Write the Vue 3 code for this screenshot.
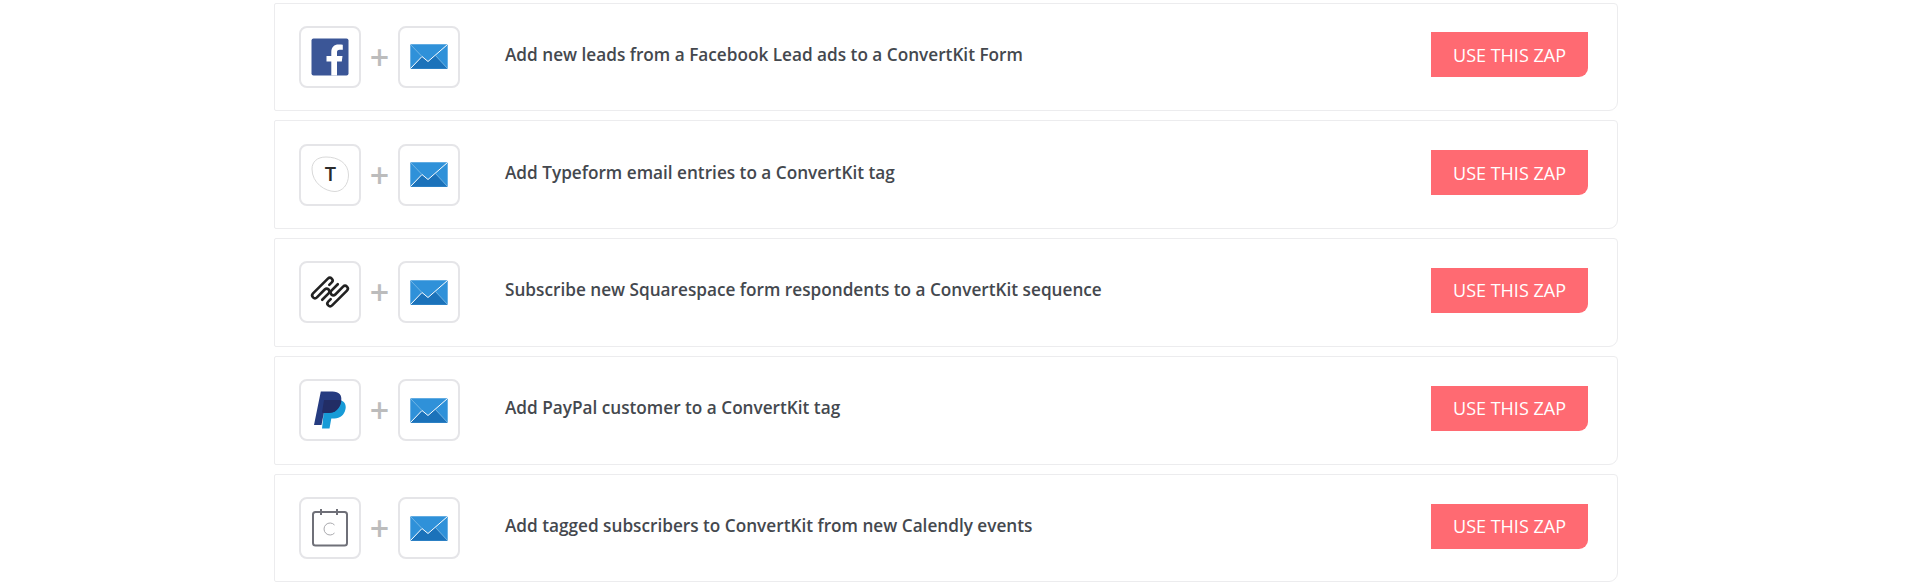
<template>
  <div class="page">
    <div v-for="zap in zaps" :key="zap.app" class="zap">
      <div class="icons">
        <div class="tile">
          <svg v-if="zap.app === 'facebook'" width="38" height="38" viewBox="0 0 38 38">
            <rect x="0.5" y="0.5" width="37" height="37" rx="2" fill="#3b5697" />
            <path d="M26 37.5V23.4h4.8l.7-5.5H26v-3.5c0-1.6.5-2.7 2.8-2.7h3V6.8c-.5-.1-2.300-.2-4.300-.2-4.300 0-7.200 2.600-7.200 7.400v3.900h-4.800v5.500h4.800v14.100z" fill="#fff" />
          </svg>
          <svg v-else-if="zap.app === 'typeform'" width="38" height="38" viewBox="0 0 38 38">
            <path d="M1 13C1 6 6 1 15 1c12 0 22.500 6 22.500 18 0 10-6.500 16.500-13.500 16.500C14 35.500 1 27 1 13z" fill="#fff" stroke="#d9d9d9" />
            <text x="19.500" y="25" class="t-mark" text-anchor="middle">T</text>
          </svg>
          <svg v-else-if="zap.app === 'squarespace'" width="44" height="36" viewBox="0 0 44 36">
            <g transform="translate(22 18) rotate(-45)" fill="none" stroke="#222" stroke-width="2.600" stroke-linecap="round">
              <path d="M4.500 -5.500H8A2.750 2.750 0 0 0 8 -11H-13A2.750 2.750 0 0 0 -13 -5.500H-2A2.750 2.750 0 0 1 -2 0H-11" />
              <path d="M4.500 -5.500H8A2.750 2.750 0 0 0 8 -11H-13A2.750 2.750 0 0 0 -13 -5.500H-2A2.750 2.750 0 0 1 -2 0H-11" transform="rotate(180)" />
            </g>
          </svg>
          <svg v-else-if="zap.app === 'paypal'" width="32" height="38" viewBox="0 0 32 38">
            <path d="M11 9h13c6 0 8.500 4 7.500 9-1.200 6-5.500 9.500-11 9.500h-3.200L15.500 37.500H8z" fill="#179bd7" />
            <path d="M6.800 .5h11.700c6.500 0 9.700 3.500 8.700 9.500-1.200 7.500-6 12-13 12H9.800L7.500 34H0z" fill="#253b80" />
            <path d="M10 9h14c2 0 3 .3 3.300 1-1.200 7.500-6 12-13 12H9.800L8 21.500z" fill="#222d65" />
          </svg>
          <svg v-else width="38" height="40" viewBox="0 0 38 40">
            <rect x="2" y="4" width="34" height="33.500" rx="2.500" fill="none" stroke="#6f7078" stroke-width="2" />
            <path d="M10 1v6M26 1v6" stroke="#6f7078" stroke-width="2" />
            <path d="M23.500 17a6 6 0 1 0 0 8" fill="none" stroke="#a9a9ad" />
          </svg>
        </div>
        <span class="plus">+</span>
        <div class="tile">
          <svg width="38" height="25" viewBox="0 0 38 25">
            <rect x="0.300" y="0.300" width="37.400" height="24.400" rx="1" fill="#2f91d9" />
            <path d="M0.300 24.700 12 12.500l6 5 7-6.500 12.700 13.700z" fill="#1b72ba" />
            <path d="M0.500 24.500 12 12.500l6 5L37.500 0.500" fill="none" stroke="#fff" stroke-width="1" />
            <path d="M0.500 0.500 12 12.500M25 11l12.500 13.500" fill="none" stroke="#8fc4ea" stroke-width="0.700" />
          </svg>
        </div>
      </div>
      <p class="title">{{ zap.title }}</p>
      <a class="use-btn">USE THIS ZAP</a>
    </div>
  </div>
</template>

<script setup>
const zaps = [
  { app: 'facebook', title: 'Add new leads from a Facebook Lead ads to a ConvertKit Form' },
  { app: 'typeform', title: 'Add Typeform email entries to a ConvertKit tag' },
  { app: 'squarespace', title: 'Subscribe new Squarespace form respondents to a ConvertKit sequence' },
  { app: 'paypal', title: 'Add PayPal customer to a ConvertKit tag' },
  { app: 'calendly', title: 'Add tagged subscribers to ConvertKit from new Calendly events' }
]
</script>

<style scoped>
.page {
  display: flex;
  flex-direction: column;
  gap: 9.500px;
  width: 1344px;
  margin-left: 274px;
  padding-top: 2.500px;
  font-family: "Open Sans", sans-serif;
}
.zap {
  display: flex;
  align-items: center;
  height: 108.400px;
  box-sizing: border-box;
  padding: 0 29px 0 24px;
  background: #fff;
  border: 1px solid #ececee;
  border-radius: 2px 4px 9px 2px;
}
.icons {
  display: flex;
  align-items: center;
}
.tile {
  display: flex;
  align-items: center;
  justify-content: center;
  width: 62px;
  height: 62px;
  box-sizing: border-box;
  background: #fff;
  border: 2px solid #e5e5e8;
  border-radius: 8px;
}
.plus {
  width: 37px;
  text-align: center;
  font-size: 34px;
  font-weight: 600;
  line-height: 1;
  color: #bcbcbc;
}
.t-mark {
  font: 600 20px "Open Sans", sans-serif;
  fill: #2b2b2b;
}
.title {
  flex: 1;
  margin: 0 0 5px 45px;
  font-size: 17.200px;
  font-weight: 600;
  color: #44484e;
}
.use-btn {
  display: flex;
  align-items: center;
  justify-content: center;
  width: 157px;
  height: 45px;
  margin-bottom: 4px;
  background: #ff6a72;
  border-bottom-right-radius: 9px;
  color: #fff;
  font-size: 18px;
}
</style>
